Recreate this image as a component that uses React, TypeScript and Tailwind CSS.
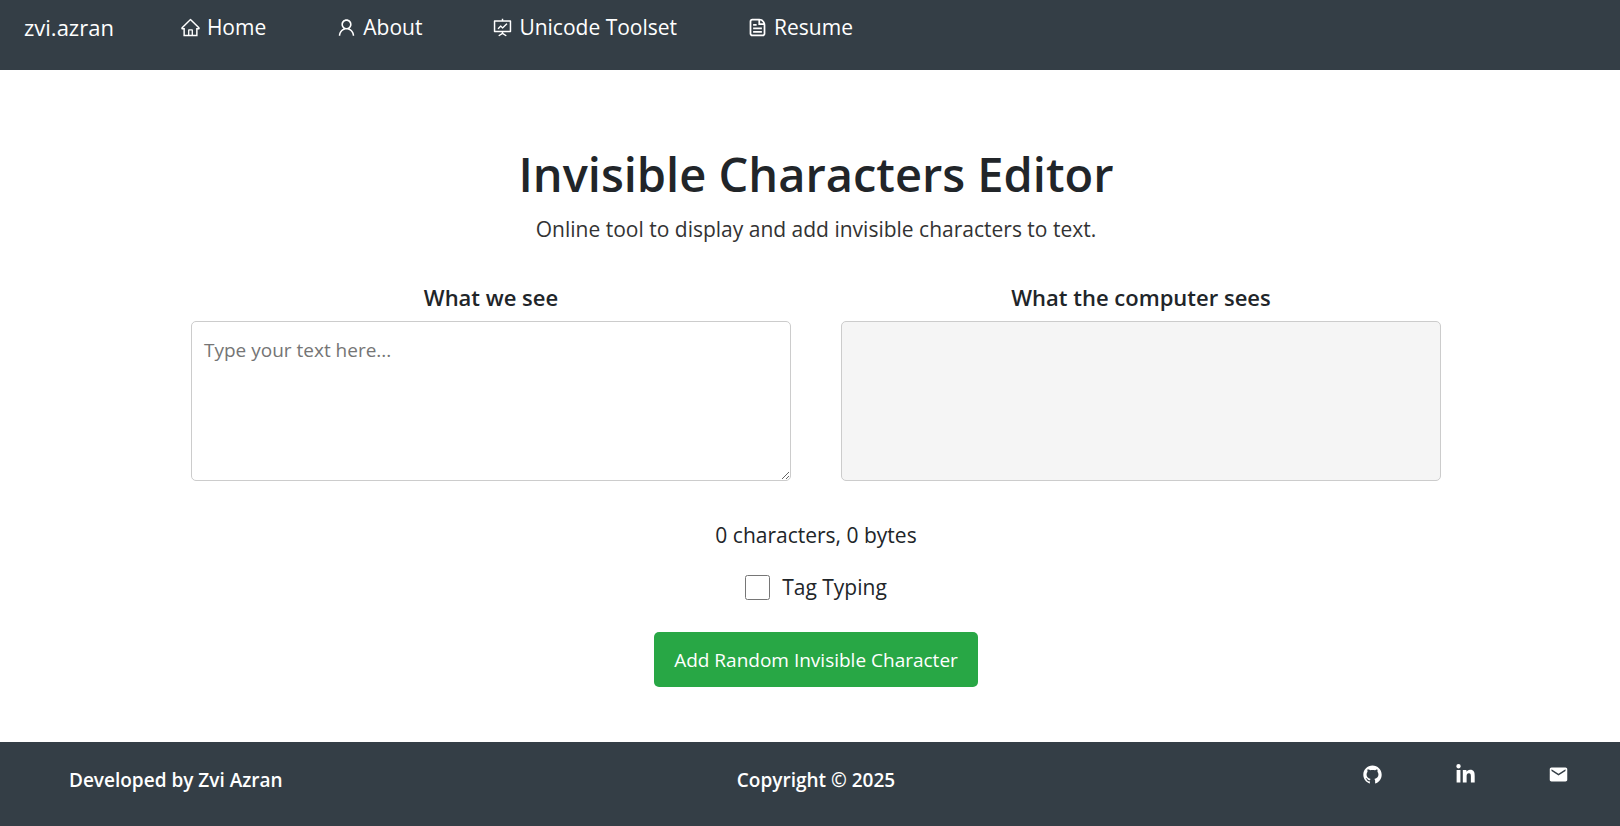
import { useState } from "react";
import { AiOutlineHome, AiOutlineUser, AiOutlineFundProjectionScreen, AiFillGithub } from "react-icons/ai";
import { CgFileDocument } from "react-icons/cg";
import { FaLinkedinIn } from "react-icons/fa";
import { MdEmail } from "react-icons/md";

const links = [
  { label: "Home", Icon: AiOutlineHome },
  { label: "About", Icon: AiOutlineUser },
  { label: "Unicode Toolset", Icon: AiOutlineFundProjectionScreen },
  { label: "Resume", Icon: CgFileDocument },
];

const socials = [
  { label: "GitHub", Icon: AiFillGithub },
  { label: "LinkedIn", Icon: FaLinkedinIn },
  { label: "Email", Icon: MdEmail },
];

const invisible = ["\u200B", "\u200C", "\u200D", "\u2060", "\u00AD"];

function reveal(text: string) {
  return Array.from(text)
    .map((c) => {
      const code = c.codePointAt(0) ?? 0;
      return invisible.includes(c) || code >= 0xe0000
        ? `[U+${code.toString(16).toUpperCase().padStart(4, "0")}]`
        : c;
    })
    .join("");
}

export default function App() {
  const [text, setText] = useState("");
  const [tagTyping, setTagTyping] = useState(false);

  const type = (value: string) => {
    if (tagTyping && value.startsWith(text)) {
      const added = Array.from(value.slice(text.length)).map((c) => {
        const code = c.charCodeAt(0);
        return code >= 32 && code < 127 ? String.fromCodePoint(0xe0000 + code) : c;
      });
      setText(text + added.join(""));
    } else {
      setText(value);
    }
  };

  return (
    <div className="flex min-h-screen flex-col bg-white font-['Open_Sans',sans-serif] text-[#212529]">
      <nav className="flex h-[70px] items-start gap-[66px] bg-[#343e46] px-6 pt-[11px] text-[21px] leading-8 text-white">
        <a href="#top" className="text-[22px]">zvi.azran</a>
        <ul className="flex gap-[70px]">
          {links.map(({ label, Icon }) => (
            <li key={label}>
              <a href="#top" className="flex items-center gap-[6px]">
                <Icon className="size-[21px]" />
                {label}
              </a>
            </li>
          ))}
        </ul>
      </nav>

      <main className="flex flex-1 flex-col items-center pb-12 pl-3 pt-[72px] text-[21px] leading-8">
        <h1 className="text-[47px] font-semibold leading-[64px]">Invisible Characters Editor</h1>
        <p className="mt-[7px] text-[#333333]">Online tool to display and add invisible characters to text.</p>

        <div className="mt-9 flex w-full justify-center gap-[50px]">
          <div className="flex w-[600px] flex-col items-center gap-2">
            <label htmlFor="source" className="text-[22px] font-semibold">What we see</label>
            <textarea
              id="source"
              value={text}
              onChange={(e) => type(e.target.value)}
              placeholder="Type your text here..."
              className="h-40 w-full resize rounded-[5px] border border-[#cccccc] px-3 py-3 text-[19px] placeholder:text-[#757575]"
            />
          </div>
          <div className="flex w-[600px] flex-col items-center gap-2">
            <h2 className="text-[22px] font-semibold">What the computer sees</h2>
            <output htmlFor="source" className="block h-40 w-full overflow-auto rounded-[5px] border border-[#cccccc] bg-[#f5f5f5] px-3 py-3 text-[19px]">
              {reveal(text)}
            </output>
          </div>
        </div>

        <p className="mt-[38px]">
          {Array.from(text).length} characters, {new TextEncoder().encode(text).length} bytes
        </p>

        <label className="mt-5 flex items-center gap-3">
          <input type="checkbox" checked={tagTyping} onChange={(e) => setTagTyping(e.target.checked)} className="size-[25px]" />
          Tag Typing
        </label>

        <button
          type="button"
          onClick={() => setText(text + invisible[Math.floor(Math.random() * invisible.length)])}
          className="mt-[29px] h-[55px] rounded-[5px] bg-[#28a745] px-5 text-[19px] text-white"
        >
          Add Random Invisible Character
        </button>
      </main>

      <footer className="grid h-[84px] grid-cols-3 items-start bg-[#343e46] pl-3 pt-[14px] text-[19px] font-semibold leading-[48px] text-white">
        <p className="pl-[57px]">Developed by Zvi Azran</p>
        <p className="text-center">Copyright © 2025</p>
        <ul className="flex justify-end gap-[72px] pr-[51px] pt-2">
          {socials.map(({ label, Icon }) => (
            <li key={label}>
              <a href="#top" aria-label={label}>
                <Icon className="size-[21px]" />
              </a>
            </li>
          ))}
        </ul>
      </footer>
    </div>
  );
}
